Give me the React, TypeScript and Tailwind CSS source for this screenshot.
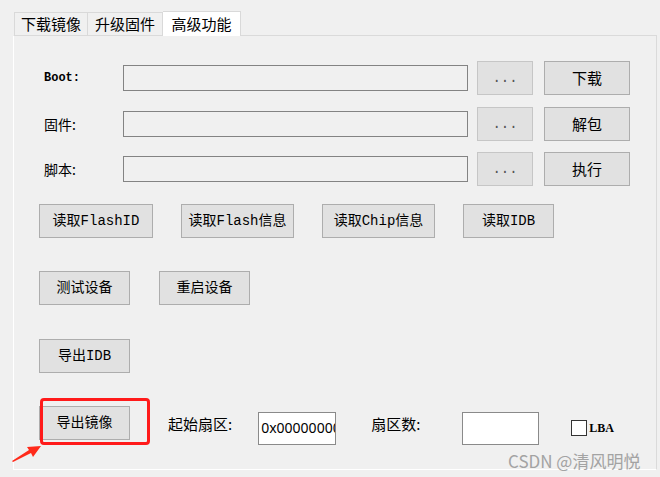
import React from 'react';

const cjk = "font-['Noto_Sans_CJK_SC',sans-serif]";
const mono = "font-['Liberation_Mono','Noto_Sans_CJK_SC',monospace]";

function WinButton({ label, w, disabled }: { label: string; w: string; disabled?: boolean }) {
    return (
        <button
            className={`${w} h-[34px] shrink-0 border bg-[#e1e1e1] text-[14px] leading-none ${mono} ${
                disabled ? 'border-[#c6c6c6] text-[#555]' : 'border-[#adadad] text-black'
            }`}
        >
            {label}
        </button>
    );
}

function FileRow({ label, action, labelMono }: { label: string; action: string; labelMono?: boolean }) {
    return (
        <div className="flex items-center h-[34px]">
            <span className={`w-[79px] shrink-0 text-black ${labelMono ? `${mono} text-[12px] font-semibold` : `${cjk} text-[14px]`}`}>
                {label}
            </span>
            <div className="w-[345px] h-[26px] shrink-0 border border-[#838383] bg-[#f0f0f0]" />
            <div className="w-[9px]" />
            <WinButton label="..." w="w-[56px]" disabled />
            <div className="w-[11px]" />
            <button className={`w-[86px] h-[34px] border border-[#adadad] bg-[#e1e1e1] text-[15px] text-black ${cjk}`}>{action}</button>
        </div>
    );
}

export default function App() {
    return (
        <div className="relative w-[660px] h-[477px] bg-[#f0f0f0] overflow-hidden">
            {/* tab strip */}
            <div className={`flex items-end h-[36px] pl-[14px] ${cjk} text-[15px] text-black`}>
                <div className="w-[74px] h-[24px] border border-b-0 border-[#d9d9d9] flex items-center justify-center">下载镜像</div>
                <div className="w-[75px] h-[24px] border border-b-0 border-l-0 border-[#d9d9d9] flex items-center justify-center">升级固件</div>
                <div className="w-[78px] h-[25px] border border-b-0 border-l-0 border-[#d9d9d9] bg-white flex items-center justify-center">高级功能</div>
            </div>

            {/* panel */}
            <div className="ml-[13px] w-[644px] h-[435px] -mt-px border border-[#dadada] border-l-white border-b-white bg-[#f0f0f0] pt-[25px] pl-[30px]">
                <FileRow label="Boot:" action="下载" labelMono />
                <div className="mt-[12px]">
                    <FileRow label="固件:" action="解包" />
                </div>
                <div className="mt-[11px]">
                    <FileRow label="脚本:" action="执行" />
                </div>

                <div className="-ml-[5px] mt-[18px] flex gap-[28px]">
                    <WinButton label="读取FlashID" w="w-[114px]" />
                    <WinButton label="读取Flash信息" w="w-[113px]" />
                    <WinButton label="读取Chip信息" w="w-[113px]" />
                    <WinButton label="读取IDB" w="w-[91px]" />
                </div>

                <div className="-ml-[5px] mt-[33px] flex gap-[29px]">
                    <WinButton label="测试设备" w="w-[91px]" />
                    <WinButton label="重启设备" w="w-[91px]" />
                </div>

                <div className="-ml-[5px] mt-[34px] flex">
                    <WinButton label="导出IDB" w="w-[91px]" />
                </div>

                <div className="-ml-[5px] mt-[33px] flex items-start">
                    <div className="relative">
                        <WinButton label="导出镜像" w="w-[91px]" />
                        <div className="absolute left-[1px] -top-[8px] w-[110px] h-[47px] border-[3px] border-[#ff1a1a] rounded-[4px]" />
                    </div>
                    <span className={`ml-[38px] mt-[7px] text-[15px] text-black ${cjk}`}>起始扇区:</span>
                    <div className="ml-[26px] mt-[6px] w-[78px] h-[33px] border border-[#8a8a8a] bg-white overflow-hidden whitespace-nowrap pl-[2px] pt-[4px] text-[14px] font-['Noto_Sans',sans-serif]">
                        0x00000000
                    </div>
                    <span className={`ml-[35px] mt-[7px] text-[15px] text-black ${cjk}`}>扇区数:</span>
                    <div className="ml-[42px] mt-[6px] w-[77px] h-[33px] border border-[#8a8a8a] bg-white" />
                    <div className="ml-[32px] mt-[13px] flex items-center">
                        <div className="w-[16px] h-[16px] border border-[#333] bg-white" />
                        <span className="ml-[2px] text-[12px] font-bold font-['Liberation_Serif',serif] text-black">LBA</span>
                    </div>
                </div>
            </div>

            {/* annotation arrow */}
            <svg className="absolute left-0 top-[440px]" width="50" height="30" viewBox="0 0 50 30">
                <polygon points="12,21 29,10 27,7 41,6 33,17 31,13 13,22" fill="#ff2a1a" />
            </svg>

            {/* watermark */}
            <div className={`absolute left-[508px] top-[448px] text-[17px] text-[#a3a3a3] ${cjk}`}>CSDN @清风明悦</div>
        </div>
    );
}
